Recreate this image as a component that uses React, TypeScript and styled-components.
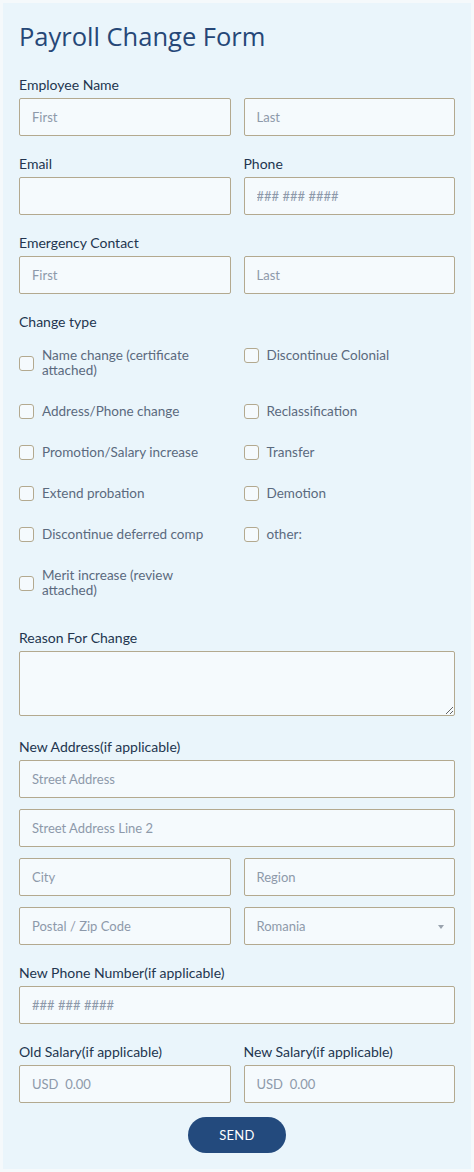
import styled, { createGlobalStyle } from "styled-components";

const GlobalStyle = createGlobalStyle`
    body {
        margin: 0;
        background: #f5f9fb;
        font-family: 'Lato', 'Open Sans', sans-serif;
    }
    * { box-sizing: border-box; }
`

const Card = styled.form`
    margin: 3px;
    width: 468px;
    background: #eaf5fb;
    padding: 17px 16px 16px 16px;
    display: flex;
    flex-direction: column;
`

const Title = styled.h1`
    margin: 0 0 24px 0;
    font-family: 'Open Sans', sans-serif;
    font-weight: 400;
    font-size: 25.5px;
    line-height: 32px;
    color: #264777;
`

const Field = styled.div<{ $mb?: number }>`
    display: flex;
    flex-direction: column;
    gap: 4px;
    margin-bottom: ${p => p.$mb ?? 19}px;
`

const Label = styled.label`
    font-size: 14px;
    line-height: 18px;
    font-weight: 400;
    color: #23354f;
`

const Row = styled.div`
    display: grid;
    grid-template-columns: 1fr 1fr;
    column-gap: 13px;
`

const Stack = styled.div`
    display: flex;
    flex-direction: column;
    gap: 11px;
`

const Input = styled.input<{ $h?: number }>`
    width: 100%;
    height: ${p => p.$h ?? 38}px;
    background: #f5fafd;
    border: 1px solid #b3a98f;
    border-radius: 2px;
    padding: 0 12px;
    font-family: inherit;
    font-size: 13px;
    color: #2c3e5c;
    &::placeholder { color: #8d99aa; }
`

const TextArea = styled.textarea`
    width: 100%;
    height: 65px;
    background: #f5fafd;
    border: 1px solid #b3a98f;
    border-radius: 2px;
    display: block;
`

const SelectWrap = styled.div`
    position: relative;
    height: 38px;
    background: #f5fafd;
    border: 1px solid #b3a98f;
    border-radius: 2px;
    display: flex;
    align-items: center;
    padding: 0 12px;
    font-size: 13px;
    color: #8d99aa;
`

const Caret = styled.span`
    position: absolute;
    right: 10px;
    top: 17px;
    width: 0;
    height: 0;
    border-left: 3.5px solid transparent;
    border-right: 3.5px solid transparent;
    border-top: 4px solid #9aa3ae;
`

const CheckGrid = styled.div`
    display: grid;
    grid-template-columns: 1fr 1fr;
    column-gap: 13px;
    row-gap: 26px;
    align-items: start;
    margin-top: 17px;
    margin-bottom: 31px;
`

const CheckItem = styled.label`
    display: flex;
    align-items: center;
    gap: 8px;
`

const Box = styled.span`
    flex: none;
    width: 15px;
    height: 15px;
    border: 1px solid #b3a98f;
    border-radius: 3px;
    background: #f5fafd;
`

const CheckText = styled.span`
    font-size: 13.5px;
    line-height: 15px;
    color: #5b6a7e;
`

const SendRow = styled.div`
    display: flex;
    justify-content: center;
    margin-top: 14px;
`

const SendButton = styled.button`
    width: 98px;
    height: 36px;
    border: none;
    border-radius: 18px;
    background: #234a7d;
    color: #ffffff;
    font-family: inherit;
    font-size: 13px;
    letter-spacing: 0.3px;
`

const checks: [string, string | null][] = [
    ["Name change (certificate\nattached)", "Discontinue Colonial"],
    ["Address/Phone change", "Reclassification"],
    ["Promotion/Salary increase", "Transfer"],
    ["Extend probation", "Demotion"],
    ["Discontinue deferred comp", "other:"],
    ["Merit increase (review\nattached)", null],
];

const Check = ({ text }: { text: string }) => (
    <CheckItem>
        <Box />
        <CheckText>
            {text.split("\n").map((l, i) => (
                <span key={i}>{i > 0 && <br />}{l}</span>
            ))}
        </CheckText>
    </CheckItem>
)

const App = () => {
    return (
        <>
            <GlobalStyle />
            <Card onSubmit={e => e.preventDefault()}>
                <Title>Payroll Change Form</Title>

                <Field>
                    <Label>Employee Name</Label>
                    <Row>
                        <Input placeholder="First" />
                        <Input placeholder="Last" />
                    </Row>
                </Field>

                <Row>
                    <Field>
                        <Label>Email</Label>
                        <Input />
                    </Field>
                    <Field>
                        <Label>Phone</Label>
                        <Input placeholder="### ### ####" />
                    </Field>
                </Row>

                <Field>
                    <Label>Emergency Contact</Label>
                    <Row>
                        <Input placeholder="First" />
                        <Input placeholder="Last" />
                    </Row>
                </Field>

                <Label>Change type</Label>
                <CheckGrid>
                    {checks.map(([a, b], i) => (
                        <>
                            <Check key={`a${i}`} text={a} />
                            {b ? <Check key={`b${i}`} text={b} /> : <div key={`b${i}`} />}
                        </>
                    ))}
                </CheckGrid>

                <Field $mb={22}>
                    <Label>Reason For Change</Label>
                    <TextArea />
                </Field>

                <Field>
                    <Label>New Address(if applicable)</Label>
                    <Stack>
                        <Input placeholder="Street Address" />
                        <Input placeholder="Street Address Line 2" />
                        <Row>
                            <Input placeholder="City" />
                            <Input placeholder="Region" />
                        </Row>
                        <Row>
                            <Input placeholder="Postal / Zip Code" />
                            <SelectWrap>
                                Romania
                                <Caret />
                            </SelectWrap>
                        </Row>
                    </Stack>
                </Field>

                <Field>
                    <Label>New Phone Number(if applicable)</Label>
                    <Input placeholder="### ### ####" />
                </Field>

                <Row>
                    <Field $mb={0}>
                        <Label>Old Salary(if applicable)</Label>
                        <Input placeholder="USD  0.00" />
                    </Field>
                    <Field $mb={0}>
                        <Label>New Salary(if applicable)</Label>
                        <Input placeholder="USD  0.00" />
                    </Field>
                </Row>

                <SendRow>
                    <SendButton type="submit">SEND</SendButton>
                </SendRow>
            </Card>
        </>
    );
}

export default App;
